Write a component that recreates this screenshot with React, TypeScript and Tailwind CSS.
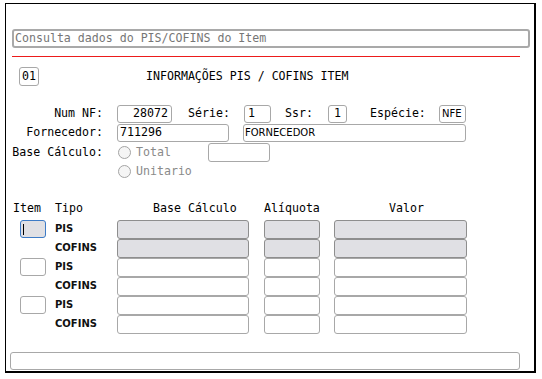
import React from 'react';

interface FieldProps {
  className?: string;
  value?: string;
  disabled?: boolean;
  focused?: boolean;
}

// basic text input look of the legacy form
const Field: React.FC<FieldProps> = ({ className = '', value, disabled, focused }) => {
  const border = focused
    ? 'border-[#3d7bc6]'
    : disabled
    ? 'border-[#8e8e8e]'
    : 'border-[#a8a8a8]';
  const bg = disabled ? 'bg-[#e0e0e4]' : 'bg-white';
  return (
    <div className={`h-[18px] shrink-0 border rounded-[3px] flex items-center ${border} ${bg} ${className}`}>
      {focused && <span className="ml-[2px] w-px h-[11px] bg-black" />}
      {value}
    </div>
  );
};

const Radio: React.FC<{ label: string }> = ({ label }) => (
  <div className="flex items-center">
    <span className="w-[13px] h-[13px] rounded-full border border-[#a4a4a4] bg-[#f5f5f5]" />
    <span className="ml-[5px] text-[#8a8a8a]">{label}</span>
  </div>
);

const rows = [
  { item: true, tipo: 'PIS', disabled: true, focused: true },
  { item: false, tipo: 'COFINS', disabled: true, focused: false },
  { item: true, tipo: 'PIS', disabled: false, focused: false },
  { item: false, tipo: 'COFINS', disabled: false, focused: false },
  { item: true, tipo: 'PIS', disabled: false, focused: false },
  { item: false, tipo: 'COFINS', disabled: false, focused: false },
];

export default function App() {
  return (
    <div className="w-[542px] h-[379px] bg-white font-['DejaVu_Sans_Mono',monospace] text-[11.6px] leading-none text-black">
      <div className="ml-[5px] mt-[3px] w-[531px] h-[370px] border-l border-t border-r-2 border-b-2 border-black flex flex-col">
        {/* title bar */}
        <div className="ml-[6px] mt-[25px] w-[518px] h-[19px] border-2 border-[#a9a9a9] rounded-[3px] flex items-center pl-[1px] text-[#767676]">
          Consulta dados do PIS/COFINS do Item
        </div>
        <div className="ml-[6px] mt-[8px] w-[508px] h-px bg-[#ec1b1b]" />

        <div className="mt-[10px] h-[19px] flex items-center">
          <div className="ml-[13px] w-[20px] h-[19px] border border-[#a8a8a8] rounded-[3px] flex items-center pl-[2px]">01</div>
          <div className="ml-[107px]">INFORMAÇÕES PIS / COFINS ITEM</div>
        </div>

        {/* header fields */}
        <div className="mt-[19px] h-[19px] flex items-start">
          <span className="w-[97px] h-[18px] flex items-center justify-end">Num NF:</span>
          <Field className="ml-[14px] w-[55px] justify-end pr-[3px]" value="28072" />
          <span className="w-[72px] h-[18px] flex items-center pl-[16px]">Série:</span>
          <Field className="w-[27px] pl-[3px]" value="1" />
          <span className="w-[57px] h-[18px] flex items-center pl-[14px]">Ssr:</span>
          <Field className="w-[19px] justify-end pr-[5px]" value="1" />
          <span className="w-[92px] h-[18px] flex items-center pl-[23px]">Espécie:</span>
          <Field className="w-[27px] pl-[2px] font-['DejaVu_Sans',sans-serif] text-[10px]" value="NFE" />
        </div>

        <div className="h-[19px] flex items-start">
          <span className="w-[97px] h-[18px] flex items-center justify-end">Fornecedor:</span>
          <Field className="ml-[14px] w-[112px] pl-[2px]" value="711296" />
          <Field className="ml-[14px] w-[223px] pl-[1px] font-['DejaVu_Sans',sans-serif] text-[10px]" value="FORNECEDOR" />
        </div>

        <div className="h-[19px] flex items-center">
          <span className="w-[97px] flex justify-end">Base Cálculo:</span>
          <div className="ml-[15px] w-[90px]">
            <Radio label="Total" />
          </div>
          <Field className="w-[62px] h-[19px]" />
        </div>

        <div className="h-[19px] flex items-center">
          <div className="ml-[112px]">
            <Radio label="Unitario" />
          </div>
        </div>

        {/* itens */}
        <div className="mt-[18px] h-[19px] flex items-center">
          <span className="w-[49px] pl-[7px]">Item</span>
          <span className="w-[62px]">Tipo</span>
          <span className="w-[147px] pl-[36px]">Base Cálculo</span>
          <span className="w-[70px]">Alíquota</span>
          <span className="pl-[55px]">Valor</span>
        </div>

        <div className="mt-[2px] flex flex-col">
          {rows.map((r, i) => (
            <div key={i} className="h-[19px] flex items-start">
              <div className="w-[49px] pl-[14px]">
                {r.item && (
                  <Field
                    className="w-[26px]"
                    disabled={r.disabled}
                    focused={r.focused}
                  />
                )}
              </div>
              <span className="w-[62px] h-[18px] flex items-center font-['DejaVu_Sans',sans-serif] font-bold text-[10px] text-[#111]">
                {r.tipo}
              </span>
              <Field className="w-[132px] h-[19px]" disabled={r.disabled} />
              <Field className="ml-[15px] w-[56px] h-[19px]" disabled={r.disabled} />
              <Field className="ml-[14px] w-[133px] h-[19px]" disabled={r.disabled} />
            </div>
          ))}
        </div>

        <Field className="ml-[4px] mt-[18px] w-[510px]" />
      </div>
    </div>
  );
}
